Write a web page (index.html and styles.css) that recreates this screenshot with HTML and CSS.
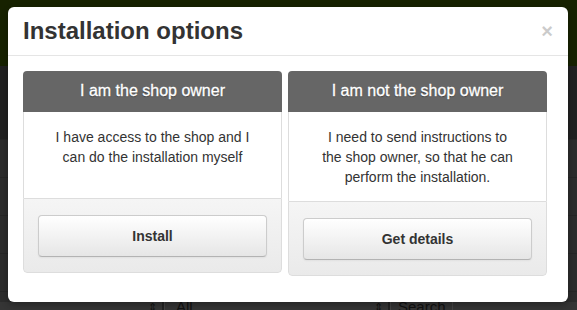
FILE: index.html
```html
<!DOCTYPE html>
<html lang="en">
<head>
<meta http-equiv="content-type" content="text/html; charset=utf-8"/>
<title>Installation options</title>
<link rel="stylesheet" href="styles.css">
</head>

<body>

<div class="page">
	<div class="topbar"></div>
	<div class="rows">
		<div class="row dark"></div>
		<div class="row"></div>
		<div class="row"></div>
		<div class="row"></div>
		<div class="row"></div>
		<div class="row"></div>
	</div>
	<div class="filters">
		<div class="select"><span class="arrows">&#8661;</span><span class="select_text">All</span></div>
		<div class="select search"><span class="arrows">&#8661;</span><span class="select_text">Search</span></div>
	</div>
</div>

<div class="modal">
	<div class="modal_header">
		<h3>Installation options</h3>
		<span class="close">&times;</span>
	</div>

	<div class="modal_body">

		<div class="option">
			<div class="option_title">I am the shop owner</div>
			<div class="option_text option_text_short">I have access to the shop and I<br>can do the installation myself</div>
			<div class="option_footer"><button class="option_button">Install</button></div>
		</div>

		<div class="option">
			<div class="option_title">I am not the shop owner</div>
			<div class="option_text">I need to send instructions to<br>the shop owner, so that he can<br>perform the installation.</div>
			<div class="option_footer"><button class="option_button">Get details</button></div>
		</div>

	</div>
</div>

</body>
</html>
```

FILE: styles.css
```css
html {
background: #2b2b2b;
}

body {
margin: 0;
font: 14px "Liberation Sans", Arial, sans-serif;
color: #333333;
width: 577px;
height: 310px;
overflow: hidden;
position: relative;
}


/* page behind the backdrop */


.topbar {
height: 66px;
background-color: #172200;
}

.row {
height: 37px;
border-bottom: 1px solid #262626;
background-color: #2c2c2c;
}

.row.dark {
height: 73px;
background-color: #212121;
}

.filters {
position: absolute;
top: 302px;
left: 0;
right: 0;
height: 8px;
background-color: #353535;
}

.select {
position: absolute;
left: 148px;
top: -2px;
display: flex;
align-items: flex-start;
font-size: 15px;
color: #111111;
line-height: 14px;
}

.select.search {
left: 374px;
}

.arrows {
font-size: 11px;
color: #111111;
width: 10px;
padding-right: 4px;
border-right: 2px solid #222222;
}

.select_text {
padding-left: 11px;
padding-right: 6px;
border-left: 1px solid #444444;
}

.search .select_text {
padding-left: 7px;
border-right: 1px solid #444444;
}


/* modal */


/* the modal floats over the dimmed page */
.modal {
position: absolute;
left: 8px;
top: 7px;
width: 560px;
height: 295px;
background-color: #ffffff;
border-radius: 6px;
box-shadow: 0 3px 7px rgba(0, 0, 0, 0.3);
}

.modal_header {
display: flex;
align-items: center;
justify-content: space-between;
height: 48px;
padding: 0 15px 0 15px;
border-bottom: 1px solid #e5e5e5;
}

.modal_header h3 {
margin: 0;
font-size: 24px;
font-weight: bold;
color: #333333;
padding-bottom: 1px;
}

.close {
font-size: 20px;
font-weight: bold;
color: #000000;
opacity: 0.2;
line-height: 20px;
}

.modal_body {
display: grid;
grid-template-columns: 259px 259px;
column-gap: 6px;
align-items: start;
padding: 15px;
}


/* option panels */


.option {
border-radius: 4px;
overflow: hidden;
text-align: center;
}

.option_title {
height: 41px;
line-height: 40px;
background-color: #666666;
color: #ffffff;
font-size: 16px;
text-shadow: 0 1px 1px rgba(0, 0, 0, 0.4);
-webkit-text-stroke: 0.3px #ffffff;
}

.option_text {
padding: 15px 15px 14px;
line-height: 20px;
border-left: 1px solid #dddddd;
border-right: 1px solid #dddddd;
}

.option_text_short {
min-height: 57px;
}

.option_footer {
padding: 16px 14px 15px;
background: linear-gradient(#f5f5f5, #eaeaea);
border: 1px solid #dddddd;
border-bottom-left-radius: 4px;
border-bottom-right-radius: 4px;
}

.option_button {
display: block;
width: 100%;
height: 42px;
font: bold 14px "Liberation Sans", Arial, sans-serif;
color: #333333;
background: linear-gradient(#ffffff, #e6e6e6);
border: 1px solid #cccccc;
border-bottom-color: #b3b3b3;
border-radius: 4px;
box-shadow: inset 0 1px 0 rgba(255, 255, 255, 0.2), 0 1px 2px rgba(0, 0, 0, 0.05);
cursor: pointer;
}
```
